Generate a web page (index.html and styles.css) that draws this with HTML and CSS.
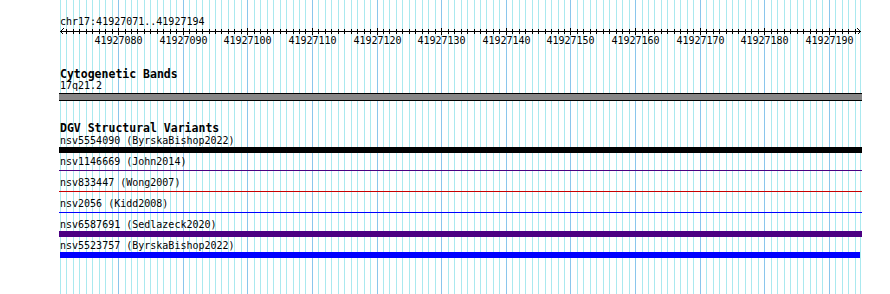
FILE: index.html
```html
<!DOCTYPE html>
<html lang="en">
<head>
<meta charset="utf-8">
<title>Genome browser tracks</title>
<link rel="stylesheet" href="styles.css">
</head>
<body>
<div class="tracks">
  <svg class="grid" width="803" height="294" viewBox="0 0 803 294" aria-hidden="true">
    <path class="grid-minor" d="M1.5 0v294M7.5 0v294M14.5 0v294M20.5 0v294M27.5 0v294M33.5 0v294M40.5 0v294M46.5 0v294M53.5 0v294M66.5 0v294M72.5 0v294M78.5 0v294M85.5 0v294M91.5 0v294M98.5 0v294M104.5 0v294M111.5 0v294M117.5 0v294M130.5 0v294M137.5 0v294M143.5 0v294M150.5 0v294M156.5 0v294M162.5 0v294M169.5 0v294M175.5 0v294M182.5 0v294M195.5 0v294M201.5 0v294M208.5 0v294M214.5 0v294M221.5 0v294M227.5 0v294M234.5 0v294M240.5 0v294M246.5 0v294M259.5 0v294M266.5 0v294M272.5 0v294M279.5 0v294M285.5 0v294M292.5 0v294M298.5 0v294M305.5 0v294M311.5 0v294M324.5 0v294M330.5 0v294M337.5 0v294M343.5 0v294M350.5 0v294M356.5 0v294M363.5 0v294M369.5 0v294M376.5 0v294M389.5 0v294M395.5 0v294M402.5 0v294M408.5 0v294M415.5 0v294M421.5 0v294M427.5 0v294M434.5 0v294M440.5 0v294M453.5 0v294M460.5 0v294M466.5 0v294M473.5 0v294M479.5 0v294M486.5 0v294M492.5 0v294M499.5 0v294M505.5 0v294M518.5 0v294M524.5 0v294M531.5 0v294M537.5 0v294M544.5 0v294M550.5 0v294M557.5 0v294M563.5 0v294M570.5 0v294M583.5 0v294M589.5 0v294M595.5 0v294M602.5 0v294M608.5 0v294M615.5 0v294M621.5 0v294M628.5 0v294M634.5 0v294M647.5 0v294M654.5 0v294M660.5 0v294M667.5 0v294M673.5 0v294M679.5 0v294M686.5 0v294M692.5 0v294M699.5 0v294M712.5 0v294M718.5 0v294M725.5 0v294M731.5 0v294M738.5 0v294M744.5 0v294M751.5 0v294M757.5 0v294M763.5 0v294M776.5 0v294M783.5 0v294M789.5 0v294M796.5 0v294M801.5 0v294"/>
    <path class="grid-major" d="M59.5 0v294M124.5 0v294M188.5 0v294M253.5 0v294M318.5 0v294M382.5 0v294M447.5 0v294M511.5 0v294M576.5 0v294M641.5 0v294M705.5 0v294M770.5 0v294"/>
  </svg>

  <section class="ruler-track">
    <div class="label">chr17:41927071..41927194</div>
    <svg class="ruler" width="803" height="20" viewBox="0 0 803 20">
      <rect class="axis" x="1" y="3" width="801" height="1"/>
      <path class="tick" d="M4.5 0.5L1.5 3.5L4.5 6.5M798.5 0.5L801.5 3.5L798.5 6.5"/>
      <path class="tick" d="M7.5 1v5M14.5 1v5M20.5 1v5M27.5 1v5M33.5 1v5M40.5 1v5M46.5 1v5M53.5 1v5M66.5 1v5M72.5 1v5M78.5 1v5M85.5 1v5M91.5 1v5M98.5 1v5M104.5 1v5M111.5 1v5M117.5 1v5M130.5 1v5M137.5 1v5M143.5 1v5M150.5 1v5M156.5 1v5M162.5 1v5M169.5 1v5M175.5 1v5M182.5 1v5M195.5 1v5M201.5 1v5M208.5 1v5M214.5 1v5M221.5 1v5M227.5 1v5M234.5 1v5M240.5 1v5M246.5 1v5M259.5 1v5M266.5 1v5M272.5 1v5M279.5 1v5M285.5 1v5M292.5 1v5M298.5 1v5M305.5 1v5M311.5 1v5M324.5 1v5M330.5 1v5M337.5 1v5M343.5 1v5M350.5 1v5M356.5 1v5M363.5 1v5M369.5 1v5M376.5 1v5M389.5 1v5M395.5 1v5M402.5 1v5M408.5 1v5M415.5 1v5M421.5 1v5M427.5 1v5M434.5 1v5M440.5 1v5M453.5 1v5M460.5 1v5M466.5 1v5M473.5 1v5M479.5 1v5M486.5 1v5M492.5 1v5M499.5 1v5M505.5 1v5M518.5 1v5M524.5 1v5M531.5 1v5M537.5 1v5M544.5 1v5M550.5 1v5M557.5 1v5M563.5 1v5M570.5 1v5M583.5 1v5M589.5 1v5M595.5 1v5M602.5 1v5M608.5 1v5M615.5 1v5M621.5 1v5M628.5 1v5M634.5 1v5M647.5 1v5M654.5 1v5M660.5 1v5M667.5 1v5M673.5 1v5M679.5 1v5M686.5 1v5M692.5 1v5M699.5 1v5M712.5 1v5M718.5 1v5M725.5 1v5M731.5 1v5M738.5 1v5M744.5 1v5M751.5 1v5M757.5 1v5M763.5 1v5M776.5 1v5M783.5 1v5M789.5 1v5M796.5 1v5"/>
      <path class="tick" d="M59.5 0v7M124.5 0v7M188.5 0v7M253.5 0v7M318.5 0v7M382.5 0v7M447.5 0v7M511.5 0v7M576.5 0v7M641.5 0v7M705.5 0v7M770.5 0v7"/>
      <g class="tick-labels">
        <text x="59.5" y="15.5">41927080</text>
        <text x="124.5" y="15.5">41927090</text>
        <text x="188.5" y="15.5">41927100</text>
        <text x="253.5" y="15.5">41927110</text>
        <text x="318.5" y="15.5">41927120</text>
        <text x="382.5" y="15.5">41927130</text>
        <text x="447.5" y="15.5">41927140</text>
        <text x="511.5" y="15.5">41927150</text>
        <text x="576.5" y="15.5">41927160</text>
        <text x="641.5" y="15.5">41927170</text>
        <text x="705.5" y="15.5">41927180</text>
        <text x="770.5" y="15.5">41927190</text>
      </g>
    </svg>
  </section>

  <section class="cyto-track">
    <div class="title">Cytogenetic Bands</div>
    <div class="label">17q21.2</div>
    <div class="band"></div>
  </section>

  <section class="dgv-track">
    <div class="title">DGV Structural Variants</div>
    <div class="features">
      <div class="feature">
        <div class="label">nsv5554090 (ByrskaBishop2022)</div>
        <div class="bar-area"><div class="bar black"></div></div>
      </div>
      <div class="feature">
        <div class="label">nsv1146669 (John2014)</div>
        <div class="bar-area"><div class="line indigo"></div></div>
      </div>
      <div class="feature">
        <div class="label">nsv833447 (Wong2007)</div>
        <div class="bar-area"><div class="line red"></div></div>
      </div>
      <div class="feature">
        <div class="label">nsv2056 (Kidd2008)</div>
        <div class="bar-area"><div class="line blue"></div></div>
      </div>
      <div class="feature">
        <div class="label">nsv6587691 (Sedlazeck2020)</div>
        <div class="bar-area"><div class="bar indigo"></div></div>
      </div>
      <div class="feature">
        <div class="label">nsv5523757 (ByrskaBishop2022)</div>
        <div class="bar-area"><div class="bar blue inset"></div></div>
      </div>
    </div>
  </section>
</div>
</body>
</html>
```

FILE: styles.css
```css
* {
  box-sizing: border-box;
}

html,
body {
  margin: 0;
  padding: 0;
  background: #ffffff;
}

body {
  width: 890px;
  height: 294px;
  overflow: hidden;
  font-family: "DejaVu Sans Mono", "Liberation Mono", monospace;
  font-size: 10px;
  color: #000000;
}

.tracks {
  position: relative;
  z-index: 0;
  margin-left: 59px;
  width: 803px;
  height: 294px;
  padding-top: 16px;
}

.grid {
  position: absolute;
  left: 0;
  top: 0;
  z-index: -1;
  shape-rendering: crispEdges;
}

.grid-minor {
  stroke: #aae9ef;
  stroke-width: 1;
  fill: none;
}

.grid-major {
  stroke: #8ac6ec;
  stroke-width: 1;
  fill: none;
}

.label {
  margin-left: 1px;
  height: 12px;
  line-height: 12px;
  white-space: pre;
}

.ruler {
  display: block;
}

.axis {
  fill: #000000;
  shape-rendering: crispEdges;
}

.tick {
  stroke: #000000;
  stroke-width: 1;
  fill: none;
  shape-rendering: crispEdges;
}

.tick-labels text {
  font-family: "DejaVu Sans Mono", "Liberation Mono", monospace;
  font-size: 10px;
  fill: #000000;
  text-anchor: middle;
}

.title {
  margin-left: 1px;
  height: 12px;
  line-height: 12px;
  font-size: 11.5px;
  font-weight: bold;
  white-space: pre;
}

.cyto-track {
  margin-top: 20px;
}

.band {
  height: 8px;
  margin-top: 1px;
  border-top: 1px solid #000000;
  border-bottom: 1px solid #000000;
  background: #878787;
}

.dgv-track {
  margin-top: 21px;
}

.features {
  margin-top: 1px;
}

.feature {
  height: 21px;
}

.bar-area {
  display: flex;
  align-items: flex-start;
  height: 6px;
}

.bar {
  flex: 1;
  height: 6px;
}

.line {
  flex: 1;
  height: 1px;
  margin-top: 2px;
}

.bar.inset {
  margin-left: 1px;
  margin-right: 2px;
}

.black {
  background: #000000;
}

.indigo {
  background: #4b0082;
}

.red {
  background: #c80000;
}

.blue {
  background: #0000ff;
}
```
